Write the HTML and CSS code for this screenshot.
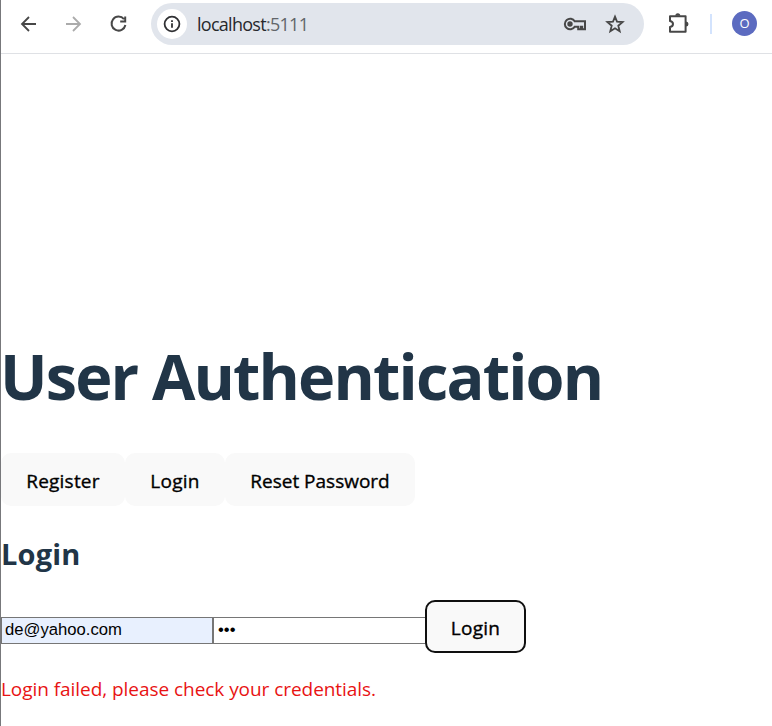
FILE: index.html
```html
<!DOCTYPE html>
<html lang="en">
<head>
<meta charset="utf-8">
<title>User Authentication</title>
<link rel="stylesheet" href="styles.css">
</head>
<body>
<div class="window">
  <header class="toolbar">
    <svg class="icon back" viewBox="0 0 20 20"><path d="M18 10H4.500M11 3 4 10l7 7"/></svg>
    <svg class="icon forward" viewBox="0 0 20 20"><path d="M3 10h13.500M10 3l7 7-7 7"/></svg>
    <svg class="icon reload" viewBox="0 0 20 20"><path d="M15 5.200A7 7 0 1 0 16.400 11M16.200 2.500V7.500H11.200"/></svg>
    <div class="address">
      <span class="info"><svg viewBox="0 0 18 18"><circle cx="9" cy="9" r="7.400"/><path d="M9 8.200v4.600M9 5.200v1.700"/></svg></span>
      <span class="url">localhost<span class="port">:5111</span></span>
      <svg class="key" viewBox="0 0 24 18"><path d="M11.700 6.300A5.300 5.300 0 1 0 11.700 11.700H15.200V14.200H17.800V11.700H19.200V14.200H22V6.300Z"/><circle class="dot" cx="7" cy="9" r="2.700"/></svg>
      <svg class="star" viewBox="0 0 20 20"><path d="M10 2.600 12 7.700l5.600.4-4.300 3.600 1.400 5.500L10 14.200l-4.700 3 1.400-5.500-4.300-3.600 5.600-.4Z"/></svg>
    </div>
    <svg class="puzzle" viewBox="0 0 22 22"><path d="M2 3.200h15.600v15.600H2v-4.700c4-.8 4-5.400 0-6.200Z" stroke-linejoin="round"/><path class="dot" d="M7.300 2.800a2.500 2.500 0 0 1 5 0ZM18 8.600a2.500 2.500 0 0 1 0 5Z"/></svg>
    <span class="divider"></span>
    <span class="avatar">O</span>
  </header>
  <main class="page">
    <h1>User Authentication</h1>
    <nav class="tabs">
      <button class="btn register">Register</button>
      <button class="btn login">Login</button>
      <button class="btn reset">Reset Password</button>
    </nav>
    <h2>Login</h2>
    <form class="form">
      <input class="field email" type="text" value="de@yahoo.com">
      <span class="field password">•••</span>
      <button class="btn login active" type="button">Login</button>
    </form>
    <p class="error">Login failed, please check your credentials.</p>
  </main>
</div>
</body>
</html>
```
FILE: styles.css
```css
* { box-sizing: border-box; }
body {
  margin: 0;
  background: #fff;
  color: #213547;
  font-family: "Open Sans", "Noto Sans", sans-serif;
}
.window {
  height: 726px;
  border-left: 1px solid #77787b;
  overflow: hidden;
}
.toolbar {
  display: flex;
  align-items: center;
  height: 54px;
  padding: 0 15px 6px 17px;
  border-bottom: 1px solid #dfe1e5;
}
svg { flex: none; fill: none; stroke: #474747; stroke-width: 1.800; }
.icon { width: 20px; height: 20px; }
.forward { margin-left: 25px; stroke: #ababab; }
.reload { margin-left: 26px; stroke-width: 2; }
.address {
  display: flex;
  align-items: center;
  width: 493px;
  height: 42px;
  margin-left: 22px;
  padding: 0 19px 0 6px;
  border-radius: 21px;
  background: #e1e5ec;
}
.info {
  display: grid;
  place-items: center;
  width: 30px;
  height: 30px;
  border-radius: 50%;
  background: #fff;
}
.info svg { width: 18px; height: 18px; stroke: #303134; }
.url {
  margin-left: 10px;
  font-size: 18px;
  letter-spacing: -0.720px;
  color: #27292c;
}
.port { color: #62656a; }
.key { width: 24px; height: 18px; margin-left: auto; stroke-width: 2; }
.star { width: 20px; height: 20px; margin-left: 18px; }
.dot { fill: #474747; stroke: none; }
.puzzle { width: 22px; height: 22px; margin-left: 24px; stroke-width: 2; }
.divider { width: 2px; height: 20px; margin-left: 20px; background: #d3e3fd; }
.avatar {
  width: 25px;
  height: 25px;
  margin-left: auto;
  border-radius: 50%;
  background: #5c6bc0;
  color: #fff;
  font-size: 13px;
  line-height: 25px;
  text-align: center;
}
.page { padding-top: 287px; }
h1 {
  margin: 0 0 0 -1px;
  font-size: 63px;
  line-height: 70px;
  letter-spacing: -1.850px;
  white-space: nowrap;
}
.tabs { display: flex; margin-top: 42px; }
.btn {
  height: 53px;
  padding: 2px 0 0;
  border: 2px solid transparent;
  border-radius: 10px;
  background: #f9f9f9;
  color: #000;
  font: 500 19px "Open Sans", sans-serif;
  -webkit-text-stroke: 0.350px #000;
  text-align: center;
}
.register { width: 124px; letter-spacing: 0.200px; }
.login { width: 100px; letter-spacing: 0.300px; }
.reset { width: 190px; }
h2 {
  margin: 28px 0 0;
  font-size: 29px;
  line-height: 40px;
  letter-spacing: 0.200px;
}
.form { display: flex; align-items: center; margin-top: 26px; }
.field {
  width: 212px;
  height: 27px;
  margin: 8px 0 0;
  padding: 0 4px 2px;
  border: 1px solid #767676;
  background: #fff;
  color: #000;
  font: 16.670px/23px "Liberation Sans", sans-serif;
}
.email { padding-left: 3px; background: #e8f0fe; }
.password { border-right: 0; }
.active { width: 101px; border-color: #101010; }
.error {
  margin: 21px 0 0;
  color: #e81313;
  font-size: 19px;
  line-height: 30px;
  letter-spacing: -0.050px;
}
```
